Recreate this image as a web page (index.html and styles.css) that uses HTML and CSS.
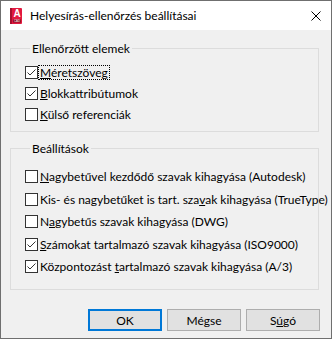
FILE: index.html
```html
<!DOCTYPE html>
<html lang="hu">
<head>
<meta charset="utf-8">
<title>Helyesírás-ellenőrzés beállításai</title>
<link rel="stylesheet" href="styles.css">
</head>
<body>
<div class="window">
  <div class="titlebar">
    <svg class="appicon" width="12" height="16" viewBox="0 0 12 16">
      <rect x="0" y="0" width="12" height="16" rx="1" fill="#e2193f"/>
      <rect x="0" y="0" width="2" height="16" fill="#a50f2c"/>
      <text x="7" y="9" font-family="Liberation Sans, sans-serif" font-size="10" font-weight="bold" fill="#fff" text-anchor="middle">A</text>
      <rect x="3" y="11.5" width="8" height="3" fill="#8a0b22"/>
      <text x="7" y="14.2" font-family="Liberation Sans, sans-serif" font-size="2.8" fill="#fff" text-anchor="middle">CAD</text>
    </svg>
    <span class="title">Helyesírás-ellenőrzés beállításai</span>
    <svg class="close" width="10" height="10" viewBox="0 0 10 10">
      <path d="M0.5 0.5 L9.5 9.5 M9.5 0.5 L0.5 9.5" stroke="#000" stroke-width="1" fill="none"/>
    </svg>
  </div>
  <div class="content">
    <fieldset class="group group-items">
      <legend>Ellenőrzött elemek</legend>
      <div class="row"><span class="cb"><svg viewBox="0 0 11 11" width="11" height="11"><polyline points="1.5,5.5 4,8 9.5,2.5" /></svg></span><span class="label focus"><u>M</u>éretszöveg</span></div>
      <div class="row"><span class="cb"><svg viewBox="0 0 11 11" width="11" height="11"><polyline points="1.5,5.5 4,8 9.5,2.5" /></svg></span><span class="label"><u>B</u>lokkattribútumok</span></div>
      <div class="row"><span class="cb"></span><span class="label"><u>K</u>ülső referenciák</span></div>
    </fieldset>
    <fieldset class="group group-settings">
      <legend>Beállítások</legend>
      <div class="row"><span class="cb"></span><span class="label"><u>N</u>agybetűvel kezdődő szavak kihagyása (Autodesk)</span></div>
      <div class="row"><span class="cb"></span><span class="label">Kis- és nagybetűket is tart. sza<u>v</u>ak kihagyása (TrueType)</span></div>
      <div class="row"><span class="cb"></span><span class="label">N<u>a</u>gybetűs szavak kihagyása (DWG)</span></div>
      <div class="row"><span class="cb"><svg viewBox="0 0 11 11" width="11" height="11"><polyline points="1.5,5.5 4,8 9.5,2.5" /></svg></span><span class="label"><u>S</u>zámokat tartalmazó szavak kihagyása (ISO9000)</span></div>
      <div class="row"><span class="cb"><svg viewBox="0 0 11 11" width="11" height="11"><polyline points="1.5,5.5 4,8 9.5,2.5" /></svg></span><span class="label">Központozást <u>t</u>artalmazó szavak kihagyása (A/3)</span></div>
    </fieldset>
    <div class="buttons">
      <button class="btn default">OK</button>
      <button class="btn">Mégse</button>
      <button class="btn">S<u>ú</u>gó</button>
    </div>
  </div>
</div>
</body>
</html>
```
FILE: styles.css
```css
* { box-sizing: border-box; }
html, body { margin: 0; padding: 0; }
body {
  font-family: "Segoe UI", Lato, sans-serif;
  font-size: 12px;
  color: #000;
  background: #f0f0f0;
}
.window {
  width: 332px;
  height: 339px;
  border: 1px solid #6f6f6f;
  background: #f0f0f0;
  display: flex;
  flex-direction: column;
}
.titlebar {
  height: 29px;
  flex: none;
  background: #fff;
  display: flex;
  align-items: center;
  padding-left: 9px;
}
.appicon { display: block; flex: none; }
.title { margin-left: 8px; white-space: nowrap; }
.close { display: block; margin-left: auto; margin-right: 10px; flex: none; }
.content {
  flex: 1;
  display: flex;
  flex-direction: column;
  padding: 11px 0 7px 9px;
}
.group {
  width: 309px;
  margin: 0;
  min-width: 0;
  border: 1px solid #dcdcdc;
  padding: 0 0 0 14px;
}
.group legend {
  margin-left: 5px;
  padding: 0 2px;
  line-height: 15px;
  height: 15px;
}
.group-items { padding-top: 6px; padding-bottom: 6px; }
.group-items .row { height: 21px; }
.group-settings { margin-top: 9px; padding-top: 9.25px; padding-bottom: 11.25px; }
.group-settings .row { height: 22.5px; }
.row {
  display: flex;
  align-items: center;
  white-space: nowrap;
}
.cb {
  width: 13px;
  height: 13px;
  flex: none;
  border: 1px solid #333;
  background: #fff;
  margin-right: 2px;
  display: flex;
}
.cb svg { display: block; fill: none; stroke: #333; stroke-width: 1; }
.label { line-height: 15px; }
.label.focus {
  margin-left: -2px;
  padding: 0 1px;
  border: 1px dotted #000;
  line-height: 13px;
}
u { text-underline-offset: 1px; }
.buttons {
  margin-top: 19px;
  display: flex;
  justify-content: flex-end;
  gap: 5px;
  padding-right: 11px;
}
.btn {
  width: 74px;
  height: 22px;
  font: inherit;
  color: #000;
  background: #e1e1e1;
  border: 1px solid #adadad;
  padding: 0;
  margin: 0;
}
.btn.default {
  border: 2px solid #0078d7;
}
```
